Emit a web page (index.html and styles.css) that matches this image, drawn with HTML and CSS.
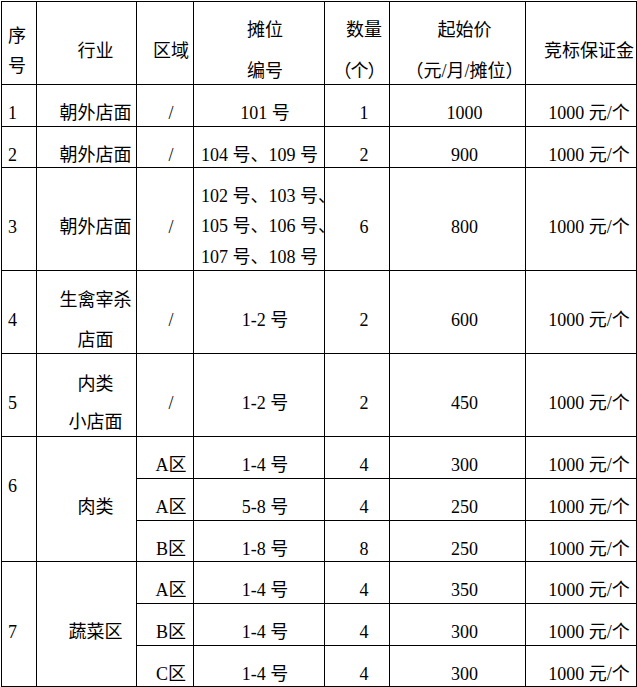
FILE: index.html
```html
<!DOCTYPE html>
<html lang="zh-CN">
<head>
<meta charset="utf-8">
<title>摊位招租表</title>
<link rel="stylesheet" href="styles.css">
</head>
<body>
<div class="page">
  <div class="sheet">
    <!-- header -->
    <div class="cell c1"><div class="l30">序</div><div class="l30">号</div></div>
    <div class="cell c2"><div class="l26">行业</div></div>
    <div class="cell c3"><div class="l26">区域</div></div>
    <div class="cell c4 g15"><div class="l26">摊位</div><div class="l26">编号</div></div>
    <div class="cell c5 g15"><div class="l26">数量</div><div class="l26 paren">（个）</div></div>
    <div class="cell c6 g15"><div class="l26">起始价</div><div class="l26">（元/月/摊位）</div></div>
    <div class="cell c7"><div class="l26">竞标保证金</div></div>

    <!-- 1 -->
    <div class="cell c1"><div class="l26">1</div></div>
    <div class="cell c2"><div class="l26">朝外店面</div></div>
    <div class="cell c3"><div class="l26">/</div></div>
    <div class="cell c4"><div class="l26">101 号</div></div>
    <div class="cell c5"><div class="l26">1</div></div>
    <div class="cell c6"><div class="l26">1000</div></div>
    <div class="cell c7"><div class="l26">1000 元/个</div></div>

    <!-- 2 -->
    <div class="cell c1"><div class="l26">2</div></div>
    <div class="cell c2"><div class="l26">朝外店面</div></div>
    <div class="cell c3"><div class="l26">/</div></div>
    <div class="cell c4 tight"><div class="l26">104 号、109 号</div></div>
    <div class="cell c5"><div class="l26">2</div></div>
    <div class="cell c6"><div class="l26">900</div></div>
    <div class="cell c7"><div class="l26">1000 元/个</div></div>

    <!-- 3 -->
    <div class="cell c1"><div class="l26">3</div></div>
    <div class="cell c2"><div class="l26">朝外店面</div></div>
    <div class="cell c3"><div class="l26">/</div></div>
    <div class="cell c4 tight spill"><div class="l30">102 号、103 号、</div><div class="l30">105 号、106 号、</div><div class="l30">107 号、108 号</div></div>
    <div class="cell c5"><div class="l26">6</div></div>
    <div class="cell c6"><div class="l26">800</div></div>
    <div class="cell c7"><div class="l26">1000 元/个</div></div>

    <!-- 4 -->
    <div class="cell c1"><div class="l26">4</div></div>
    <div class="cell c2 g14"><div class="l26">生禽宰杀</div><div class="l26">店面</div></div>
    <div class="cell c3"><div class="l26">/</div></div>
    <div class="cell c4"><div class="l26">1-2 号</div></div>
    <div class="cell c5"><div class="l26">2</div></div>
    <div class="cell c6"><div class="l26">600</div></div>
    <div class="cell c7"><div class="l26">1000 元/个</div></div>

    <!-- 5 -->
    <div class="cell c1"><div class="l26">5</div></div>
    <div class="cell c2 g12"><div class="l26">内类</div><div class="l26">小店面</div></div>
    <div class="cell c3"><div class="l26">/</div></div>
    <div class="cell c4"><div class="l26">1-2 号</div></div>
    <div class="cell c5"><div class="l26">2</div></div>
    <div class="cell c6"><div class="l26">450</div></div>
    <div class="cell c7"><div class="l26">1000 元/个</div></div>

    <!-- 6 -->
    <div class="cell c1 span3 raised"><div class="l26">6</div></div>
    <div class="cell c2 span3"><div class="l26">肉类</div></div>
    <div class="cell c3"><div class="l26">A区</div></div>
    <div class="cell c4"><div class="l26">1-4 号</div></div>
    <div class="cell c5"><div class="l26">4</div></div>
    <div class="cell c6"><div class="l26">300</div></div>
    <div class="cell c7"><div class="l26">1000 元/个</div></div>

    <div class="cell c3"><div class="l26">A区</div></div>
    <div class="cell c4"><div class="l26">5-8 号</div></div>
    <div class="cell c5"><div class="l26">4</div></div>
    <div class="cell c6"><div class="l26">250</div></div>
    <div class="cell c7"><div class="l26">1000 元/个</div></div>

    <div class="cell c3"><div class="l26">B区</div></div>
    <div class="cell c4"><div class="l26">1-8 号</div></div>
    <div class="cell c5"><div class="l26">8</div></div>
    <div class="cell c6"><div class="l26">250</div></div>
    <div class="cell c7"><div class="l26">1000 元/个</div></div>

    <!-- 7 -->
    <div class="cell c1 span3"><div class="l26">7</div></div>
    <div class="cell c2 span3"><div class="l26">蔬菜区</div></div>
    <div class="cell c3"><div class="l26">A区</div></div>
    <div class="cell c4"><div class="l26">1-4 号</div></div>
    <div class="cell c5"><div class="l26">4</div></div>
    <div class="cell c6"><div class="l26">350</div></div>
    <div class="cell c7"><div class="l26">1000 元/个</div></div>

    <div class="cell c3"><div class="l26">B区</div></div>
    <div class="cell c4"><div class="l26">1-4 号</div></div>
    <div class="cell c5"><div class="l26">4</div></div>
    <div class="cell c6"><div class="l26">300</div></div>
    <div class="cell c7"><div class="l26">1000 元/个</div></div>

    <div class="cell c3"><div class="l26">C区</div></div>
    <div class="cell c4"><div class="l26">1-4 号</div></div>
    <div class="cell c5"><div class="l26">4</div></div>
    <div class="cell c6"><div class="l26">300</div></div>
    <div class="cell c7"><div class="l26">1000 元/个</div></div>
  </div>
</div>
</body>
</html>
```

FILE: styles.css
```css
html, body {
  margin: 0;
  padding: 0;
  background: #ffffff;
}

.page {
  padding: 1px 0 0 1px;
}

.sheet {
  display: grid;
  grid-template-columns: 35px 100px 57px 131px 65px 136px 111px;
  grid-template-rows: 83px 42px 41px 103px 83px 83px 42px 42px 41px 42px 42px 41px;
  width: 636px;
  box-sizing: border-box;
  border-left: 1px solid #000;
  border-top: 1px solid #000;
  font-family: "Liberation Serif", "Noto Sans CJK SC", serif;
  font-size: 18px;
  color: #000;
}

.cell {
  box-sizing: border-box;
  border-right: 1px solid #000;
  border-bottom: 1px solid #000;
  padding-top: 15px;
  display: flex;
  flex-direction: column;
  justify-content: center;
  text-align: center;
  white-space: nowrap;
  overflow: hidden;
  min-height: 0;
}

.l26 { line-height: 26px; }
.l30 { line-height: 30.5px; }

.g15 { gap: 15px; }
.g14 { gap: 14px; }
.g12 { gap: 12px; }

.c1 { padding-left: 6px; text-align: left; }
.c2 { padding-left: 18px; }
.c3 { padding-left: 12px; }
.c4 { padding-left: 12px; }
.c5 { padding-left: 14px; }
.c6 { padding-left: 14px; }
.c7 { padding-left: 16px; }

.c1 .l30 { line-height: 30px; }

.paren {
  letter-spacing: -1px;
  margin-left: -10px;
}

.c4.tight {
  padding-left: 7px;
  text-align: left;
}

.c4.spill {
  overflow: visible;
}

.span3 { grid-row: span 3; }

.raised { padding-bottom: 41px; }
```
